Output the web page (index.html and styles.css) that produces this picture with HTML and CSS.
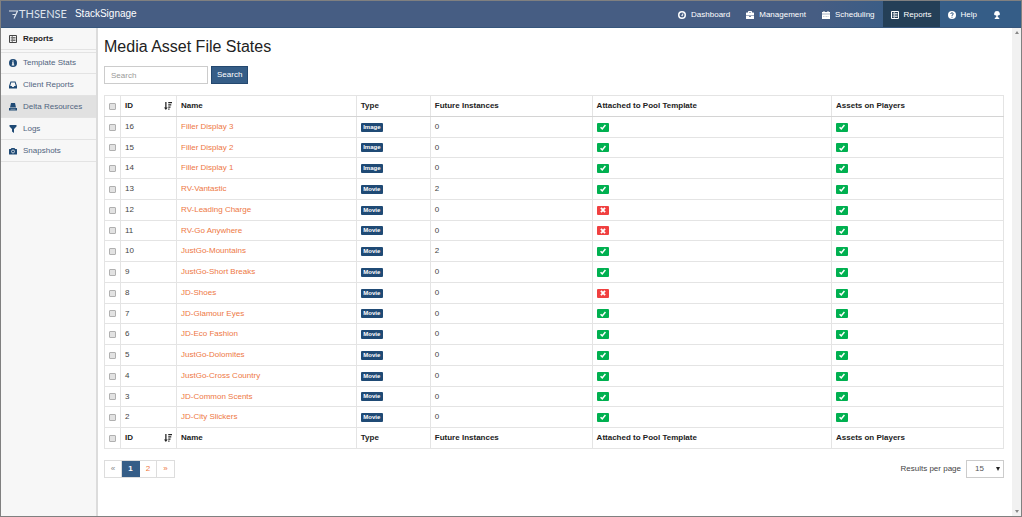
FILE: index.html
```html
<!DOCTYPE html>
<html lang="en">
<head>
<meta charset="utf-8">
<title>StackSignage - Media Asset File States</title>
<link rel="stylesheet" href="styles.css">
</head>
<body>
<svg class="sprite" aria-hidden="true">
  <symbol id="i-dash" viewBox="0 0 16 16"><circle cx="8" cy="8" r="6.5" fill="none" stroke="currentColor" stroke-width="3"/><path d="M7 9l3-4-1 5z" fill="currentColor" stroke="currentColor"/></symbol>
  <symbol id="i-case" viewBox="0 0 16 16"><path fill="currentColor" d="M4 3V1.500Q4 0 5.500 0h5Q12 0 12 1.500V3h3q1 0 1 1v5H0V4q0-1 1-1zm2 0h4V2H6zM0 10h6v1.500h4V10h6v5q0 1-1 1H1q-1 0-1-1z"/></symbol>
  <symbol id="i-cal" viewBox="0 0 16 16"><path fill="currentColor" d="M0 2h3V0h2v2h6V0h2v2h3v3.500H0zM0 6.500h16V16H0z"/><path d="M2 11h12" stroke="#8b9ab3" stroke-dasharray="2 1"/></symbol>
  <symbol id="i-list" viewBox="0 0 16 16"><path fill="none" stroke="currentColor" stroke-width="2" d="M1 1h14v14H1z"/><path fill="none" stroke="currentColor" stroke-width="1.500" d="M3.500 5h2M3.500 8h2M3.500 11h2M7 5h6M7 8h6M7 11h6M6.500 2v12"/></symbol>
  <symbol id="i-help" viewBox="0 0 16 16"><circle cx="8" cy="8" r="8" fill="currentColor"/><path d="M5.500 6q0-2.500 2.500-2.500T10.500 6Q10.500 7.500 8 8.500V10M8 11.500v2" fill="none" stroke="#355d87" stroke-width="2"/></symbol>
  <symbol id="i-tree" viewBox="0 0 16 16"><path fill="currentColor" d="M8 0q5 0 5.500 4.500Q15 9 9.500 9v3l3 2v2h-9v-2l3-2V9Q1 9 2.500 4.500 3 0 8 0z"/></symbol>
  <symbol id="i-info" viewBox="0 0 16 16"><circle cx="8" cy="8" r="8" fill="currentColor"/><path d="M6.500 3h3v2h-3zM6 6.500h3.500v4.500h1v2H5.500v-2h1V8H6z" fill="#f7f7f7"/></symbol>
  <symbol id="i-inbox" viewBox="0 0 16 16"><path fill="currentColor" fill-rule="evenodd" d="M3 1h10l3 9v5H0v-5zm1.500 2L2.500 10h3l1 2h3l1-2h3l-2-7z"/></symbol>
  <symbol id="i-drive" viewBox="0 0 16 16"><path fill="currentColor" d="M4 0h8l2 9H2zM0 10h16v5H0z"/><path stroke="#e1e1e1" d="M3 12.500h10"/></symbol>
  <symbol id="i-filter" viewBox="0 0 16 16"><path fill="currentColor" d="M1 0h14v3l-5 5v8l-4-3V8L1 3z"/></symbol>
  <symbol id="i-cam" viewBox="0 0 16 16"><path fill="currentColor" d="M5 2h6l1.500 2H15q1 0 1 1v9q0 1-1 1H1q-1 0-1-1V5q0-1 1-1h2.500z"/><circle cx="8" cy="9" r="3" fill="none" stroke="#f7f7f7" stroke-width="1.500"/></symbol>
  <symbol id="i-sort" viewBox="0 0 16 16"><path fill="currentColor" d="M2.500 0h2.500v11h2.500L3.700 16 0 11h2.500zM8.500 0H16v2.500H8.500zM8.500 4.500h6v2.300h-6zM8.500 9H13v2.300H8.500zM8.500 13h2.500v2.500H8.500z"/></symbol>
  <symbol id="i-ok" viewBox="0 0 16 16"><path fill="none" stroke="currentColor" stroke-width="4" d="M1.500 8.500l4.500 4.500 8.500-10.500"/></symbol>
  <symbol id="i-no" viewBox="0 0 16 16"><path fill="none" stroke="currentColor" stroke-width="5" d="M2.500 2.500l11 11M13.500 2.500l-11 11"/></symbol>
</svg>
<div class="app">
  <header class="topbar">
    <a class="brand" href="#">
      <span class="logo"><svg class="seven" viewBox="0 0 10 9"><path d="M0 1h8.500L5 8.500M3.500 4.500h3" fill="none" stroke="currentColor" stroke-width="1.200"/></svg>THSENSE</span>
      <span class="product">StackSignage</span>
    </a>
    <nav class="topnav">
      <a href="#"><svg class="icon"><use href="#i-dash"/></svg>Dashboard</a>
      <a href="#"><svg class="icon"><use href="#i-case"/></svg>Management</a>
      <a href="#"><svg class="icon"><use href="#i-cal"/></svg>Scheduling</a>
      <a href="#" class="current"><svg class="icon"><use href="#i-list"/></svg>Reports</a>
      <a href="#"><svg class="icon"><use href="#i-help"/></svg>Help</a>
      <a href="#" aria-label="Outdoor"><svg class="icon"><use href="#i-tree"/></svg></a>
    </nav>
  </header>
  <div class="body">
    <nav class="sidebar">
      <div class="heading"><svg class="icon"><use href="#i-list"/></svg>Reports</div>
      <a href="#"><svg class="icon"><use href="#i-info"/></svg>Template Stats</a>
      <a href="#"><svg class="icon"><use href="#i-inbox"/></svg>Client Reports</a>
      <a href="#" class="current"><svg class="icon"><use href="#i-drive"/></svg>Delta Resources</a>
      <a href="#"><svg class="icon"><use href="#i-filter"/></svg>Logs</a>
      <a href="#"><svg class="icon"><use href="#i-cam"/></svg>Snapshots</a>
    </nav>
    <main class="content">
      <h1>Media Asset File States</h1>
      <form class="search">
        <input type="text" placeholder="Search" aria-label="Search">
        <button type="button">Search</button>
      </form>
      <table class="assets">
        <colgroup><col class="c-check"><col class="c-id"><col class="c-name"><col class="c-type"><col class="c-future"><col><col class="c-players"></colgroup>
        <thead><tr><th><input type="checkbox" aria-label="Select all"></th><th><span class="sortable">ID<svg class="icon"><use href="#i-sort"/></svg></span></th><th>Name</th><th>Type</th><th>Future Instances</th><th>Attached to Pool Template</th><th>Assets on Players</th></tr></thead>
        <tbody id="rows"></tbody>
        <tfoot><tr><th><input type="checkbox" aria-label="Select all"></th><th><span class="sortable">ID<svg class="icon"><use href="#i-sort"/></svg></span></th><th>Name</th><th>Type</th><th>Future Instances</th><th>Attached to Pool Template</th><th>Assets on Players</th></tr></tfoot>
      </table>
      <div class="footer">
        <nav class="pager"><span>«</span><a href="#" class="current">1</a><a href="#">2</a><a href="#">»</a></nav>
        <div class="per-page"><label for="count">Results per page</label>
          <span class="select"><select id="count"><option>15</option></select><svg viewBox="0 0 4 4"><path d="M0 0h4L2 4z"/></svg></span>
        </div>
      </div>
    </main>
    <div class="scroll" aria-hidden="true"><svg viewBox="0 0 4 3"><path d="M0 3h4L2 0z"/></svg><svg viewBox="0 0 4 3"><path d="M0 0h4L2 3z"/></svg></div>
  </div>
</div>
<script src="app.js"></script>
</body>
</html>
```
FILE: styles.css
```css
* { box-sizing: border-box; }
body { margin: 0; font: 8px/10px "Liberation Sans", Arial, sans-serif; color: #444; background: #fff; }
a { color: #ee7844; text-decoration: none; }
.sprite { display: none; }
.icon { width: 8px; height: 8px; flex: none; }
.app { min-height: 100vh; display: flex; flex-direction: column; border: 1px solid #808080; }

.topbar { display: flex; justify-content: space-between; height: 27px; padding-right: 12px; background: linear-gradient(90deg, #465d83 80%, #355d87 90%); border-bottom: 1px solid #36567c; }
.brand { display: flex; align-items: center; gap: 8px; padding-left: 8px; color: #fff; }
.logo { display: flex; align-items: center; font: 400 11px/12px Lato, sans-serif; color: #dde3ec; }
.seven { width: 10px; height: 9px; }
.product { font-size: 10px; line-height: 12px; }
.topnav { display: flex; }
.topnav a { display: flex; align-items: center; gap: 5px; padding: 1px 8px 0; color: #fff; }
.topnav .current { background: #243f57; }

.body { flex: 1; display: flex; }
.sidebar { width: 97px; flex: none; background: #f7f7f7; border-right: 2px solid #dcdcdc; }
.sidebar .icon { color: #1f4a75; }
.sidebar a, .heading { display: flex; align-items: center; gap: 6px; height: 22px; padding-left: 8px; border-bottom: 1px solid #e3e3e3; color: #50647e; }
.sidebar .heading { margin-bottom: 2px; font-weight: 700; color: #222; }
.sidebar .heading .icon { color: #444; }
.heading + a { border-top: 1px solid #e3e3e3; }
.sidebar .current { background: #e1e1e1; }

.content { flex: 1; padding: 10px 8px 10px 6px; }
h1 { margin: 0 0 10px; font: 400 16px/18px "Liberation Sans", sans-serif; color: #222; }
.search { display: flex; gap: 3px; margin-bottom: 11px; }
.search input { width: 104px; height: 18px; padding: 0 6px; border: 1px solid #ccc; font: inherit; color: #444; }
.search input::placeholder { color: #999; }
.search button { height: 18px; padding: 0 5px; border: 1px solid #24486f; background: #355d87; color: #fff; font: inherit; }

.assets { width: 100%; table-layout: fixed; border-collapse: collapse; }
.c-check { width: 16px; }
.c-id { width: 56px; }
.c-name { width: 20%; }
.c-type { width: 74px; }
.c-future { width: 18%; }
.c-players { width: 172px; }
.assets th, .assets td { height: 21px; padding: 0 4px; border: 1px solid #e4e4e4; text-align: left; }
.assets tbody tr:nth-child(4n+2) td { height: 20px; }
.assets th { color: #222; }
.assets thead th { border-bottom-color: #d4d4d4; }
.assets tfoot th { border-top-color: #d4d4d4; }
.sortable { display: flex; justify-content: space-between; align-items: center; }
.assets input { appearance: none; display: block; width: 7px; height: 7px; margin: 0; border: 1px solid #b0b0b0; border-radius: 1px; background: #e2e2e2; }
.tag { display: block; width: 22px; height: 9px; border-radius: 1px; background: #1f4a75; color: #fff; font: 700 6px/9px "Liberation Sans", sans-serif; text-align: center; }
.state { display: flex; align-items: center; justify-content: center; width: 12px; height: 9px; border-radius: 1px; background: #00b050; color: #fff; }
.state svg { width: 6px; height: 6px; }
.state.no { background: #f04040; }

.footer { display: flex; justify-content: space-between; margin-top: 11px; }
.pager { display: flex; height: 18px; border: 1px solid #ddd; line-height: 16px; text-align: center; }
.pager > * { width: 17px; border-right: 1px solid #ddd; }
.pager > :last-child { border-right: 0; }
.pager span { color: #888; }
.pager .current { width: 18px; background: #355d87; border-color: #355d87; color: #fff; font-weight: 700; }
.per-page { display: flex; align-items: center; gap: 5px; }
.select { display: grid; align-items: center; }
.select > * { grid-area: 1 / 1; }
.select select { appearance: none; width: 38px; height: 18px; padding: 0 8px; border: 1px solid #ccc; border-radius: 0; background: #fff; color: #555; font: inherit; }
.select svg { width: 4px; height: 4px; margin-right: 4px; justify-self: end; pointer-events: none; fill: #222; }

.scroll { width: 9px; flex: none; display: flex; flex-direction: column; justify-content: space-between; align-items: center; padding: 3px 0; background: #f1f1f1; }
.scroll svg { width: 4px; height: 3px; fill: #888; }
```
FILE: app.js
```js
const assets = [
  [16, "Filler Display 3", "Image", 0, true],
  [15, "Filler Display 2", "Image", 0, true],
  [14, "Filler Display 1", "Image", 0, true],
  [13, "RV-Vantastic", "Movie", 2, true],
  [12, "RV-Leading Charge", "Movie", 0, false],
  [11, "RV-Go Anywhere", "Movie", 0, false],
  [10, "JustGo-Mountains", "Movie", 2, true],
  [9, "JustGo-Short Breaks", "Movie", 0, true],
  [8, "JD-Shoes", "Movie", 0, false],
  [7, "JD-Glamour Eyes", "Movie", 0, true],
  [6, "JD-Eco Fashion", "Movie", 0, true],
  [5, "JustGo-Dolomites", "Movie", 0, true],
  [4, "JustGo-Cross Country", "Movie", 0, true],
  [3, "JD-Common Scents", "Movie", 0, true],
  [2, "JD-City Slickers", "Movie", 0, true]
];
const state = ok => `<span class="state ${ok ? "ok" : "no"}"><svg><use href="#i-${ok ? "ok" : "no"}"/></svg></span>`;
document.getElementById("rows").innerHTML = assets.map(([id, name, type, future, pool]) =>
  `<tr><td><input type="checkbox" aria-label="Select ${name}"></td><td>${id}</td><td><a href="#">${name}</a></td><td><span class="tag">${type}</span></td><td>${future}</td><td>${state(pool)}</td><td>${state(true)}</td></tr>`
).join("");
```
